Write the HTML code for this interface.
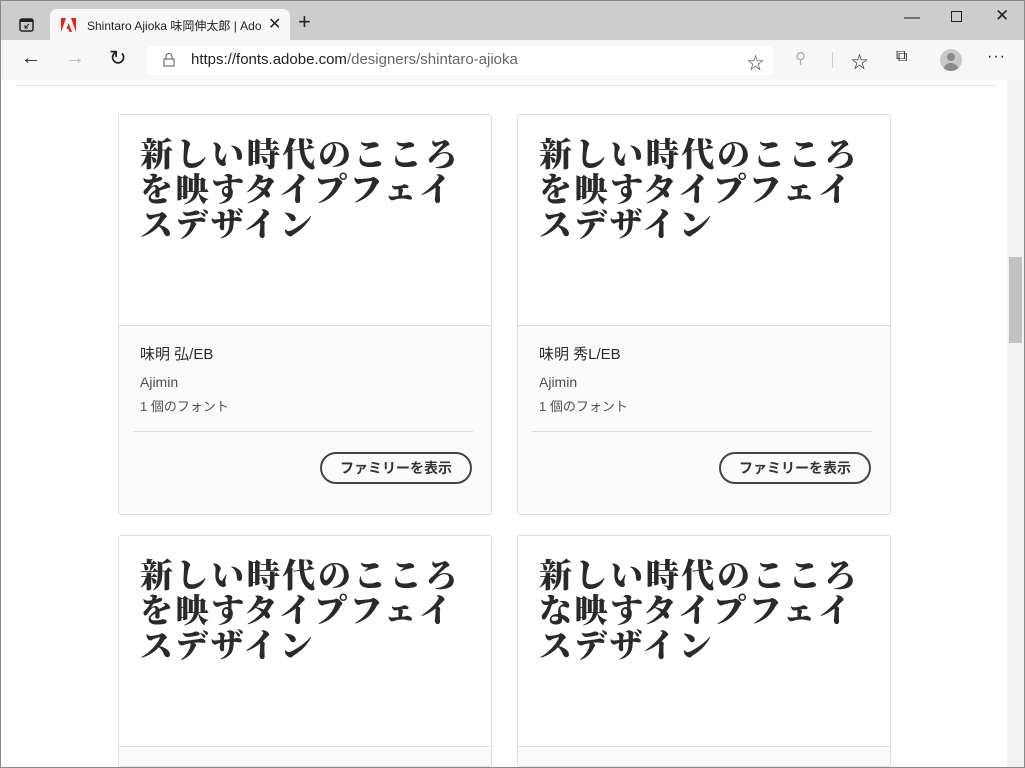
<!DOCTYPE html>
<html style="width:1025px;height:768px;overflow:hidden"><head><meta charset="utf-8"><style>
*{margin:0;padding:0;box-sizing:border-box}
body{width:1025px;height:768px;overflow:hidden;background:#fff;font-family:"Liberation Sans","Noto Sans CJK JP",sans-serif;position:relative}
.tabbar{position:absolute;left:0;top:0;width:1025px;height:40px;background:#cdcdcd;border:1px solid #888;border-bottom:none}
.tab{position:absolute;left:49px;top:8px;width:240px;height:33px;background:#f7f7f7;border-radius:7px 7px 0 0;font-size:12px;color:#222}
.toolbar{position:absolute;left:0;top:40px;width:1025px;height:40px;background:#f7f7f7;border-left:1px solid #888;border-right:1px solid #888}
.addr{position:absolute;left:146px;top:6px;width:626px;height:29px;background:#fff;border-radius:5px;font-size:15px;color:#666}
.page{position:absolute;left:0;top:80px;width:1025px;height:688px;border-left:1px solid #888;border-right:1px solid #888;border-bottom:1px solid #888}
.card{position:absolute;width:374px;height:401px;border:1px solid #ddd;border-radius:3px;background:#fafafa;overflow:hidden}
.card .top{height:211px;background:#fff;border-bottom:1px solid #ddd;padding:20px 0 0 21px;font-family:"Noto Serif CJK JP","Noto Serif CJK SC",serif;font-weight:900;font-size:33px;line-height:35px;color:#2a2a2a;letter-spacing:2.6px;white-space:nowrap}
.name{position:absolute;left:21px;top:228px;font-size:15px;color:#2c2c2c}
.f1{position:absolute;left:21px;top:259px;font-size:14px;color:#505050}
.f2{position:absolute;left:21px;top:281px;font-size:13px;color:#505050}
.sep{position:absolute;left:14px;top:316px;width:340px;height:1px;background:#ddd}
.btn{position:absolute;left:201px;top:337px;width:152px;height:32px;border:2px solid #444;border-radius:16px;font-size:14px;font-weight:bold;color:#333;text-align:center;line-height:28px}
</style></head><body>
<div class="tabbar">
 <svg style="position:absolute;left:18px;top:17px" width="16" height="14"><rect x="1" y="1" width="13" height="12" rx="2" fill="none" stroke="#222" stroke-width="1.5"/><rect x="1" y="1" width="13" height="3" fill="#222"/><path d="M10 6 L6 10 M6 7 V10 H9" stroke="#222" fill="none"/></svg>
 <div class="tab">
  <svg style="position:absolute;left:11px;top:9px" width="15" height="14"><path d="M0 14 L5 0 H0Z M15 14 L10 0 H15Z M7.5 5 L11 14 H8.5 L7.5 11 H5.5Z" fill="#e1251b"/></svg>
  <span style="position:absolute;left:37px;top:8px;white-space:nowrap;width:175px;overflow:hidden">Shintaro Ajioka 味岡伸太郎 | Adobe</span>
  <span style="position:absolute;left:218px;top:5px;font-size:16px">✕</span>
 </div>
 <span style="position:absolute;left:297px;top:8px;font-size:22px;color:#222">+</span>
 <span style="position:absolute;left:903px;top:8px;font-size:16px;color:#222">—</span>
 <div style="position:absolute;left:950px;top:10px;width:11px;height:11px;border:1px solid #222"></div>
 <span style="position:absolute;left:994px;top:5px;font-size:17px;color:#222">✕</span>
</div>
<div class="toolbar">
 <span style="position:absolute;left:20px;top:7px;font-size:20px;color:#222">←</span>
 <span style="position:absolute;left:64px;top:7px;font-size:20px;color:#bbb">→</span>
 <span style="position:absolute;left:108px;top:6px;font-size:21px;color:#222">↻</span>
 <div class="addr">
  <svg style="position:absolute;left:16px;top:7px" width="12" height="14"><rect x="1" y="6" width="10" height="7" fill="none" stroke="#555"/><path d="M3 6 V3.5 a3 3 0 0 1 6 0 V6" fill="none" stroke="#555"/></svg>
  <span style="position:absolute;left:44px;top:5px"><span style="color:#222">https://fonts.adobe.com</span>/designers/shintaro-ajioka</span>
  <span style="position:absolute;left:600px;top:3px;font-size:17px;color:#444">☆</span>
 </div>
 <span style="position:absolute;left:794px;top:9px;font-size:15px;color:#aaa">⚲</span>
 <div style="position:absolute;left:831px;top:12px;width:1px;height:16px;background:#ccc"></div>
 <span style="position:absolute;left:850px;top:8px;font-size:17px;color:#222">☆</span>
 <span style="position:absolute;left:895px;top:8px;font-size:16px;color:#222">⧉</span>
 <div style="position:absolute;left:939px;top:9px;width:22px;height:22px;border-radius:50%;background:#c8c8c8;overflow:hidden"><div style="position:absolute;left:7px;top:4px;width:8px;height:8px;border-radius:50%;background:#8a8a8a"></div><div style="position:absolute;left:3px;top:14px;width:16px;height:10px;border-radius:8px 8px 0 0;background:#8a8a8a"></div></div>
 <span style="position:absolute;left:986px;top:8px;font-size:16px;color:#222;letter-spacing:1px">···</span>
</div>
<div class="page">
 <div style="position:absolute;left:15px;top:5px;width:980px;height:1px;background:#e2e2e2"></div>
</div>
<div class="card" style="left:118px;top:114px"><div class="top">新しい時代のこころ<br>を映すタイプフェイ<br>スデザイン</div><div class="name">味明 弘/EB</div><div class="f1">Ajimin</div><div class="f2">1 個のフォント</div><div class="sep"></div><div class="btn">ファミリーを表示</div></div>
<div class="card" style="left:517px;top:114px"><div class="top">新しい時代のこころ<br>を映すタイプフェイ<br>スデザイン</div><div class="name">味明 秀L/EB</div><div class="f1">Ajimin</div><div class="f2">1 個のフォント</div><div class="sep"></div><div class="btn">ファミリーを表示</div></div>
<div class="card" style="left:118px;top:535px;height:232px"><div class="top">新しい時代のこころ<br>を映すタイプフェイ<br>スデザイン</div></div>
<div class="card" style="left:517px;top:535px;height:232px"><div class="top">新しい時代のこころ<br>な映すタイプフェイ<br>スデザイン</div></div>
<div style="position:absolute;left:1007px;top:80px;width:17px;height:687px;background:#f1f1f1"></div>
<div style="position:absolute;left:1009px;top:257px;width:13px;height:86px;background:#c1c1c1"></div>
</body></html>
